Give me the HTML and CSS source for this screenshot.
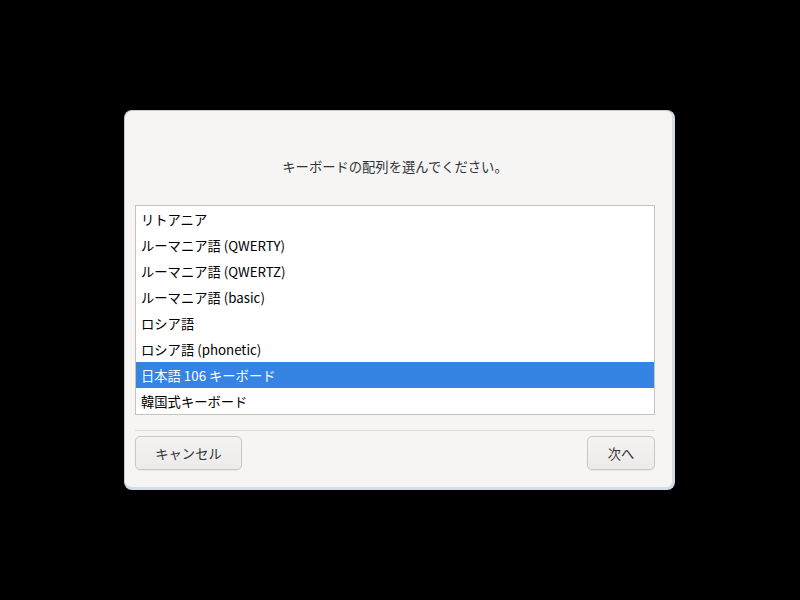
FILE: index.html
```html
<!DOCTYPE html>
<html lang="ja">
<head>
<meta charset="utf-8">
<link rel="stylesheet" href="styles.css">
</head>
<body>
<div class="screen">
  <div class="dialog">
    <div class="title">キーボードの配列を選んでください。</div>
    <div class="list">
      <div class="row">リトアニア</div>
      <div class="row">ルーマニア語 (QWERTY)</div>
      <div class="row">ルーマニア語 (QWERTZ)</div>
      <div class="row">ルーマニア語 (basic)</div>
      <div class="row">ロシア語</div>
      <div class="row">ロシア語 (phonetic)</div>
      <div class="row selected">日本語 106 キーボード</div>
      <div class="row">韓国式キーボード</div>
    </div>
    <div class="sep"></div>
    <div class="actions">
      <button class="btn cancel">キャンセル</button>
      <button class="btn next">次へ</button>
    </div>
  </div>
</div>
</body>
</html>
```

FILE: styles.css
```css
html, body {
  margin: 0;
  padding: 0;
  background: #000;
}
.screen {
  width: 800px;
  height: 600px;
  display: flex;
  align-items: flex-start;
  justify-content: flex-start;
  font-family: "Noto Sans CJK JP", sans-serif;
  font-size: 13.3px;
}
.dialog {
  margin: 110px 0 0 124px;
  width: 551px;
  height: 380px;
  box-sizing: border-box;
  background: #f6f5f4;
  border: 1px solid #c2ccd8;
  border-right: 3px solid #d3dce7;
  border-bottom: 3px solid #d3dce7;
  border-radius: 8px;
  padding: 0 17px 0 10px;
  display: flex;
  flex-direction: column;
}
.title {
  height: 94px;
  display: flex;
  align-items: center;
  justify-content: center;
  color: #2e3436;
  padding-top: 16px;
  box-sizing: border-box;
}
.list {
  background: #fff;
  border: 1px solid #c6c3be;
  display: flex;
  flex-direction: column;
}
.row {
  height: 26px;
  box-sizing: border-box;
  padding-top: 1px;
  line-height: 25px;
  padding-left: 5px;
  color: #000;
  white-space: nowrap;
}
.row.selected {
  background: #3584e4;
  color: #fff;
}
.sep {
  height: 1px;
  background: #dedbd7;
  margin-top: 15px;
}
.actions {
  display: flex;
  justify-content: space-between;
  margin-top: 5px;
}
.btn {
  height: 34px;
  box-sizing: border-box;
  border: 1px solid #cdc7c2;
  border-radius: 5px;
  background: linear-gradient(#f4f3f2, #edebe9);
  font-family: "Noto Sans CJK JP", sans-serif;
  font-size: 13.3px;
  color: #2e3436;
  padding: 0;
  box-shadow: 0 1px 1px rgba(0,0,0,0.06);
}
.cancel { width: 107px; }
.next { width: 68px; }
```
